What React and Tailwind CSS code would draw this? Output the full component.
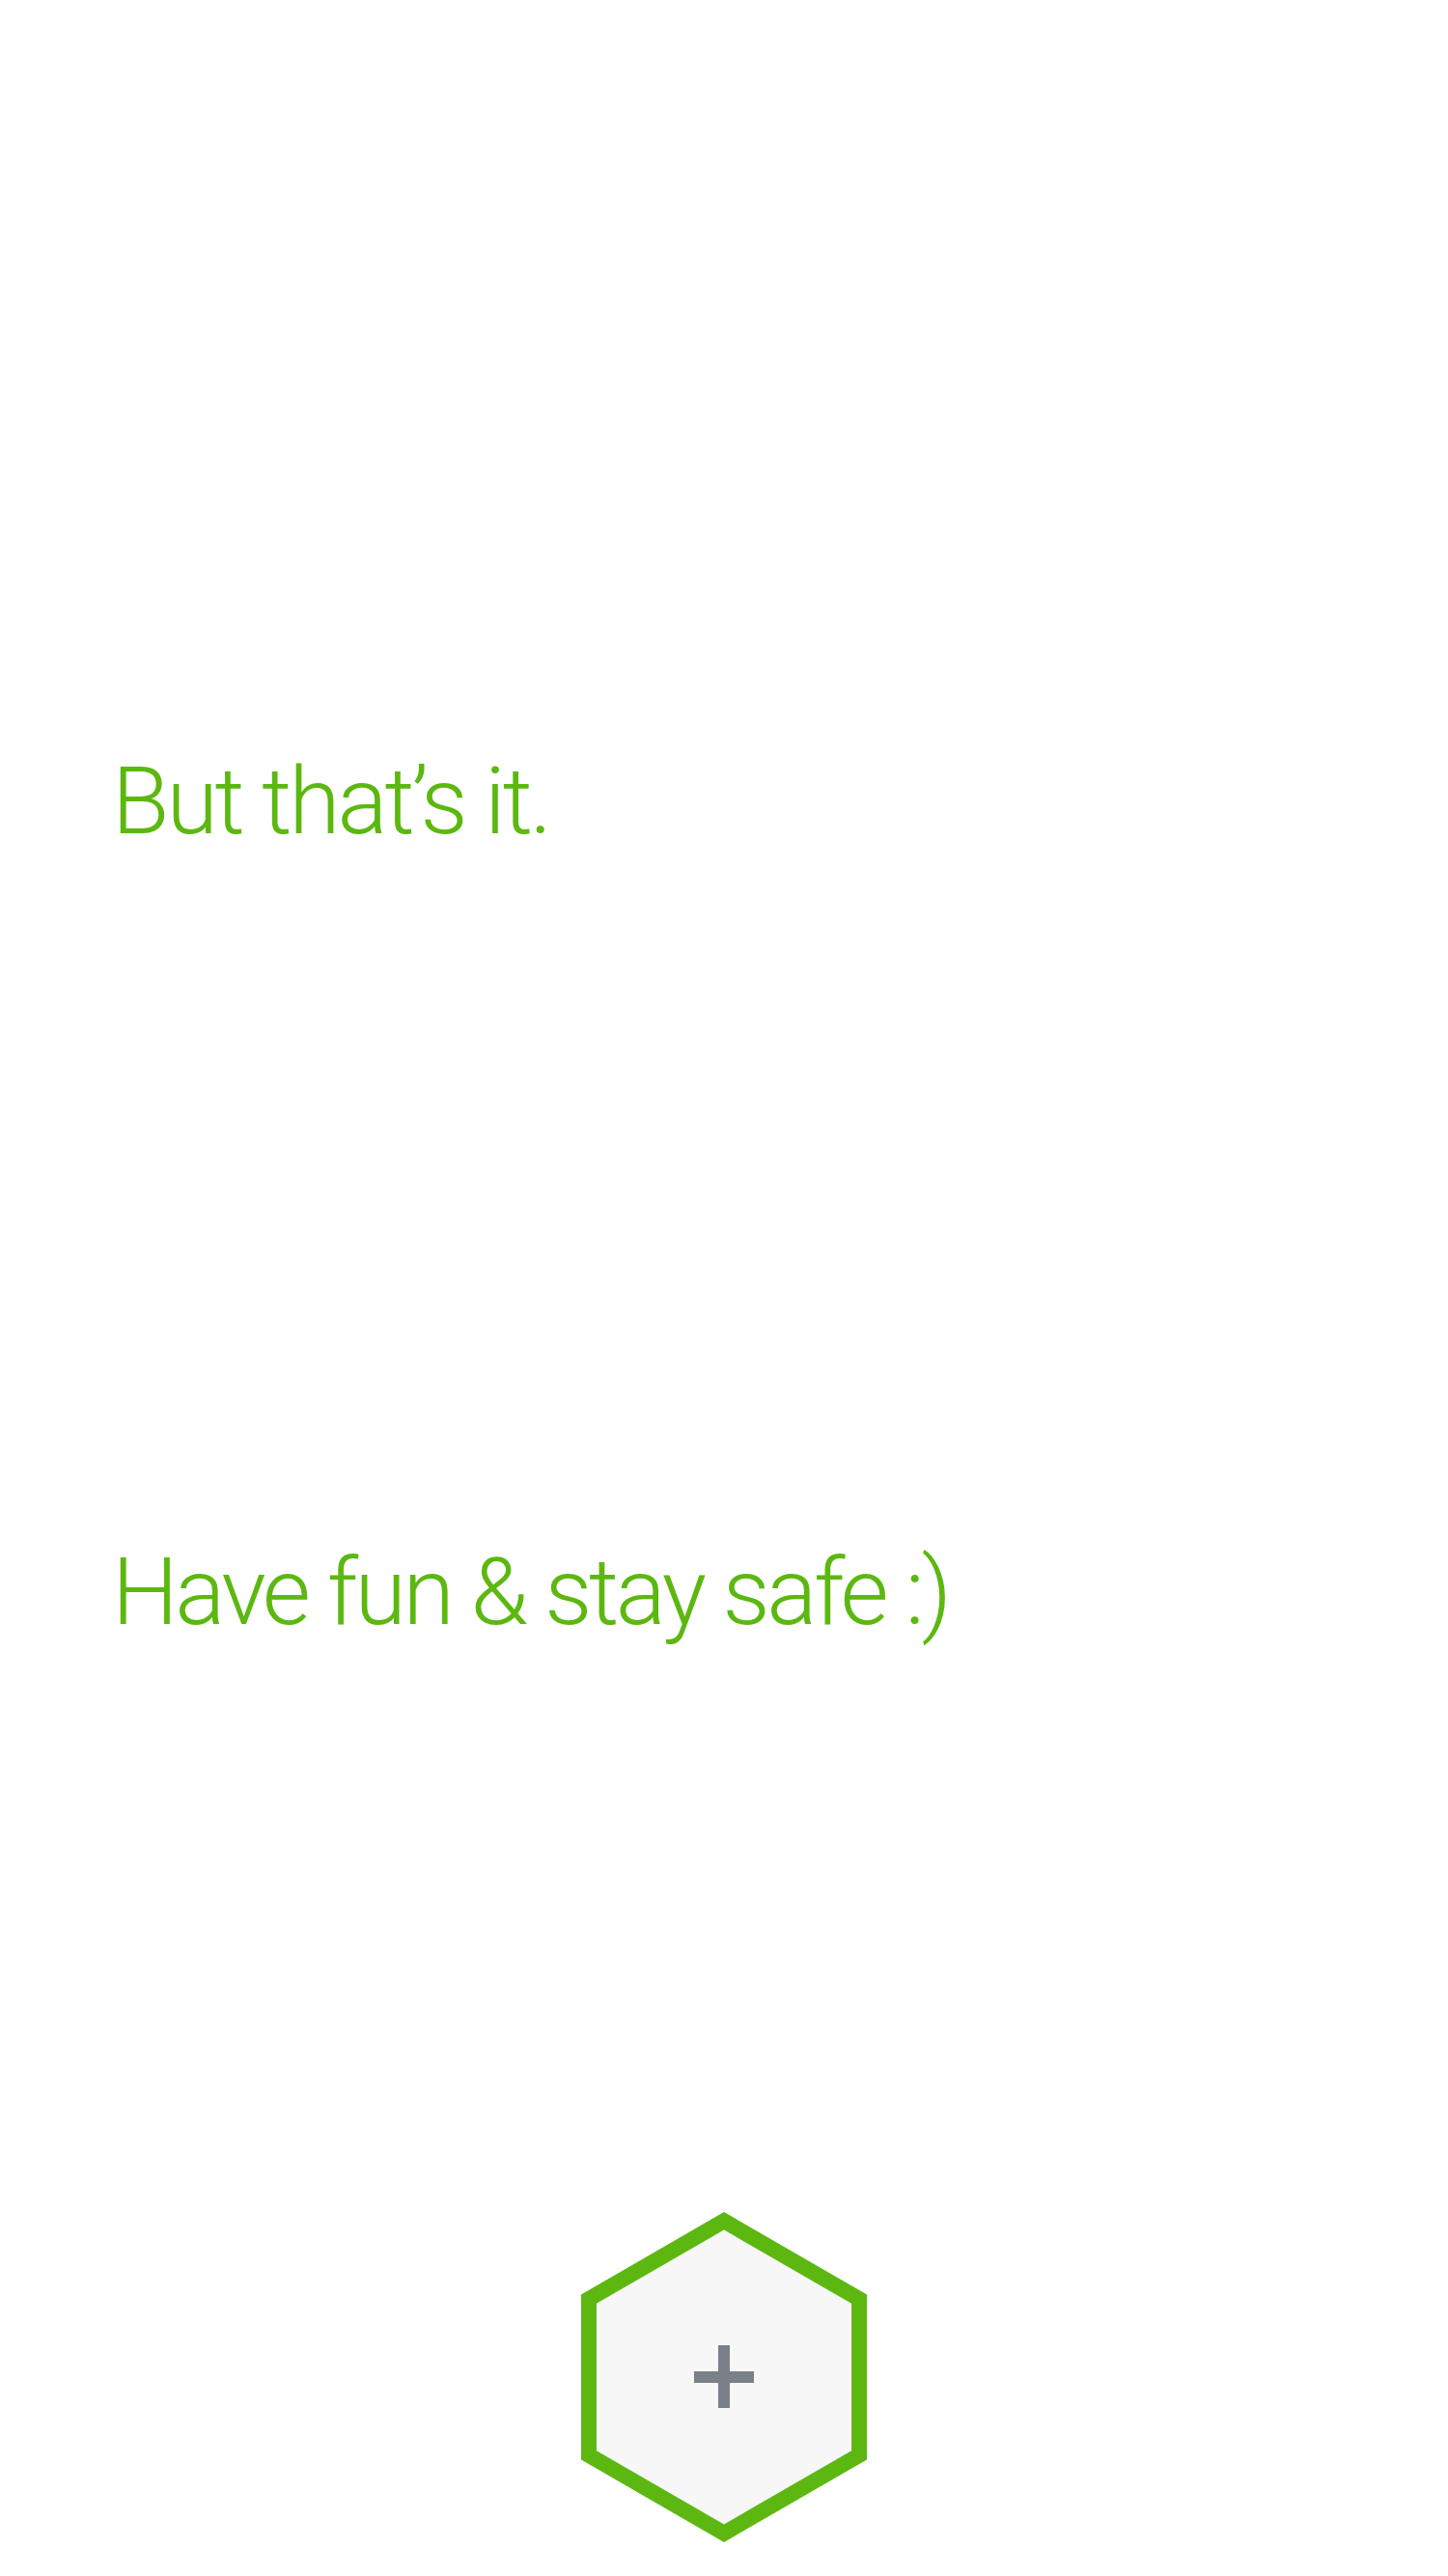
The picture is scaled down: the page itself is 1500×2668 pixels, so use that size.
export default function App() {
  return (
    <div className="min-h-[2668px] w-full bg-white font-['Roboto','Liberation_Sans',sans-serif]">
      <div className="flex flex-col px-[116px]">
        <section className="pt-[773px]">
          <h2 className="text-[97px] font-light leading-[114px] tracking-[-3.1px] text-[#5cb811]">
            But that’s it.
          </h2>
        </section>

        <section className="pt-[705px]">
          <h2 className="text-[97px] font-light leading-[114px] tracking-[-3.4px] text-[#5cb811]">
            Have fun &amp; stay safe :)
          </h2>
        </section>
      </div>

      <div className="flex justify-center pt-[585px] pb-[34px]">
        <button type="button" aria-label="Add" className="block h-[342px] w-[296px]">
          <svg width="296" height="342" viewBox="0 0 296 342">
            <polygon points="148,0 296,85.5 296,256.5 148,342 0,256.5 0,85.5" fill="#5cb811" />
            <polygon
              points="148,18.5 280.07,94.75 280.07,247.25 148,323.5 15.93,247.25 15.93,94.75"
              fill="#f7f7f7"
            />
            <rect x="117" y="165" width="62" height="12" fill="#7a8087" />
            <rect x="142" y="138" width="12" height="65" fill="#7a8087" />
          </svg>
        </button>
      </div>
    </div>
  );
}
